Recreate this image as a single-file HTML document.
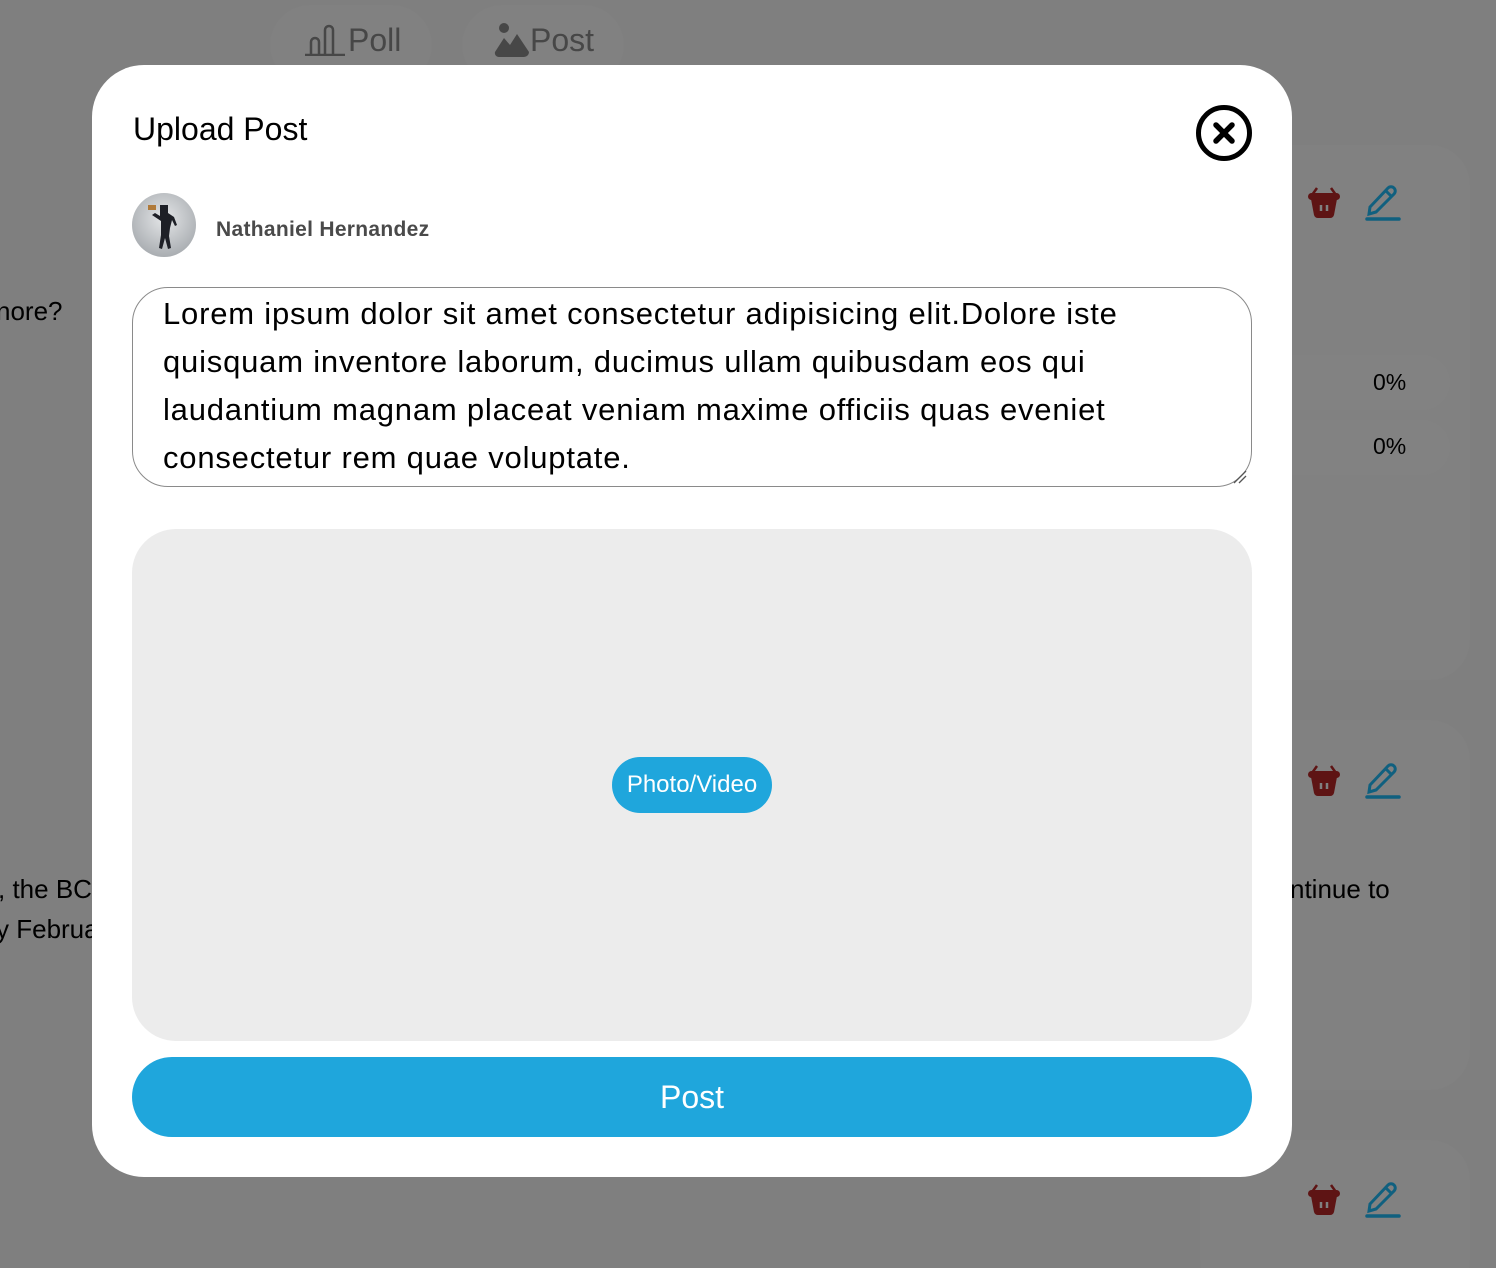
<!DOCTYPE html>
<html><head><meta charset="utf-8">
<style>
*{box-sizing:border-box;margin:0;padding:0}
html,body{width:1496px;height:1268px;overflow:hidden}
body{background:#7f7f7f;font-family:"Liberation Sans",sans-serif;position:relative}
.abs{position:absolute}
.card{position:absolute;background:#818181;border-radius:40px}
.bgtxt{position:absolute;font-size:26px;color:#000}
.modal{position:absolute;left:92px;top:65px;width:1200px;height:1112px;background:#fff;border-radius:52px}
</style></head><body>
<div class="card" style="left:270px;top:5px;width:162px;height:80px"></div>
<div class="card" style="left:462px;top:5px;width:162px;height:80px"></div>
<div class="card" style="left:1200px;top:145px;width:270px;height:535px"></div>
<div class="card" style="left:1200px;top:720px;width:270px;height:370px"></div>
<div class="card" style="left:1200px;top:1140px;width:270px;height:160px"></div>
<div class="card" style="left:1200px;top:355px;width:250px;height:55px;background:#828282"></div>
<div class="card" style="left:1200px;top:420px;width:250px;height:55px;background:#828282"></div>

<svg class="abs" style="left:304px;top:24px" width="42" height="32" viewBox="0 0 42 32" fill="none" stroke="#474747" stroke-width="2.5"><path d="M1 31H41M7 31V18a4 4 0 0 1 8 0V31M21 31V6a4 4 0 0 1 8 0V31"/></svg>
<div class="bgtxt" style="left:348px;top:22px;font-size:32px;color:#474747">Poll</div>
<svg class="abs" style="left:494px;top:22px" width="36" height="36" viewBox="0 0 36 36" fill="#474747"><circle cx="10" cy="6" r="5"/><path d="M1 30l9-14 6 7 7-11 12 18a5 5 0 0 1-5 5H5a4 4 0 0 1-4-5z"/></svg>
<div class="bgtxt" style="left:530px;top:22px;font-size:32px;color:#474747">Post</div>

<div class="bgtxt" style="left:-4px;top:296px">nore?</div>
<div class="bgtxt" style="left:-2px;top:874px">, the BC</div>
<div class="bgtxt" style="left:-4px;top:914px">y Februa</div>
<div class="bgtxt" style="left:1290px;top:874px">ntinue to</div>
<div class="bgtxt" style="left:1373px;top:369px;font-size:23px">0%</div>
<div class="bgtxt" style="left:1373px;top:433px;font-size:23px">0%</div>

<svg width="0" height="0" style="position:absolute"><defs>
<g id="bk"><path d="M9 4L4 11M23 4L28 11" stroke="#5e1414" stroke-width="2.5" fill="none"/><rect x="0" y="9" width="32" height="7" rx="3.5" fill="#5e1414"/><path d="M3 15H29L26 31Q25 34 22 34H10Q7 34 6 31Z" fill="#5e1414"/><path d="M13 21V27M19 21V27" stroke="#808080" stroke-width="2.5"/></g>
<g id="pen" fill="none" stroke="#10607f" stroke-width="3"><path d="M5 24L4 31L11 29L29 11A4 4 0 0 0 23 5Z"/><path d="M21 8L26 13"/><path d="M2 36H34" stroke-width="3.5" stroke-linecap="round"/></g>
</defs></svg>
<svg class="abs" style="left:1308px;top:184px" width="32" height="36"><use href="#bk"/></svg>
<svg class="abs" style="left:1365px;top:183px" width="36" height="40"><use href="#pen"/></svg>
<svg class="abs" style="left:1308px;top:762px" width="32" height="36"><use href="#bk"/></svg>
<svg class="abs" style="left:1365px;top:761px" width="36" height="40"><use href="#pen"/></svg>
<svg class="abs" style="left:1308px;top:1181px" width="32" height="36"><use href="#bk"/></svg>
<svg class="abs" style="left:1365px;top:1180px" width="36" height="40"><use href="#pen"/></svg>

<div class="modal">
  <div class="abs" style="left:41px;top:46px;font-size:32px;color:#000">Upload Post</div>
  <svg class="abs" style="left:1103px;top:39px" width="58" height="58" viewBox="0 0 58 58" fill="none" stroke="#000"><circle cx="29" cy="29" r="25.5" stroke-width="5"/><path d="M21 21L37 37M37 21L21 37" stroke-width="5.5" stroke-linecap="round"/></svg>
  <svg class="abs" style="left:40px;top:128px" width="64" height="64" viewBox="0 0 64 64"><defs><radialGradient id="rg" cx=".5" cy=".4" r=".6"><stop offset="0" stop-color="#e4e6e8"/><stop offset="1" stop-color="#a9adb1"/></radialGradient></defs><circle cx="32" cy="32" r="32" fill="url(#rg)"/><path d="M28 12h8v8l6 4 3 8-2 1-3-6-2 8-1 8 2 12-3 1-3-11-3 11-3-1 2-13 0-14-6-4-3-2 3-2 5 3z" fill="#1d1f26"/><rect x="16" y="12" width="8" height="5" fill="#b07a3a"/></svg>
  <div class="abs" style="left:124px;top:153px;font-size:21px;font-weight:bold;color:#4a4a4a;letter-spacing:.3px">Nathaniel Hernandez</div>
  <div class="abs" style="left:40px;top:222px;width:1120px;height:200px;border:1px solid #8a8a8a;border-radius:36px;overflow:hidden">
    <div style="position:absolute;left:30px;top:2px;width:1000px;font-size:31px;letter-spacing:.8px;line-height:48px;color:#000">Lorem ipsum dolor sit amet consectetur adipisicing elit.Dolore iste quisquam inventore laborum, ducimus ullam quibusdam eos qui laudantium magnam placeat veniam maxime officiis quas eveniet consectetur rem quae voluptate.</div>
  </div>
  <svg class="abs" style="left:1140px;top:404px" width="16" height="16" stroke="#555" stroke-width="1.3"><path d="M2 14L14 2M7 14L14 7"/></svg>
  <div class="abs" style="left:40px;top:464px;width:1120px;height:512px;background:#ececec;border-radius:44px"></div>
  <div class="abs" style="left:520px;top:692px;width:160px;height:56px;background:#1fa6dc;border-radius:28px;color:#fff;font-size:24px;text-align:center;line-height:56px">Photo/Video</div>
  <div class="abs" style="left:40px;top:992px;width:1120px;height:80px;background:#1fa6dc;border-radius:40px;color:#fff;font-size:32px;text-align:center;line-height:80px">Post</div>
</div>
</body></html>
